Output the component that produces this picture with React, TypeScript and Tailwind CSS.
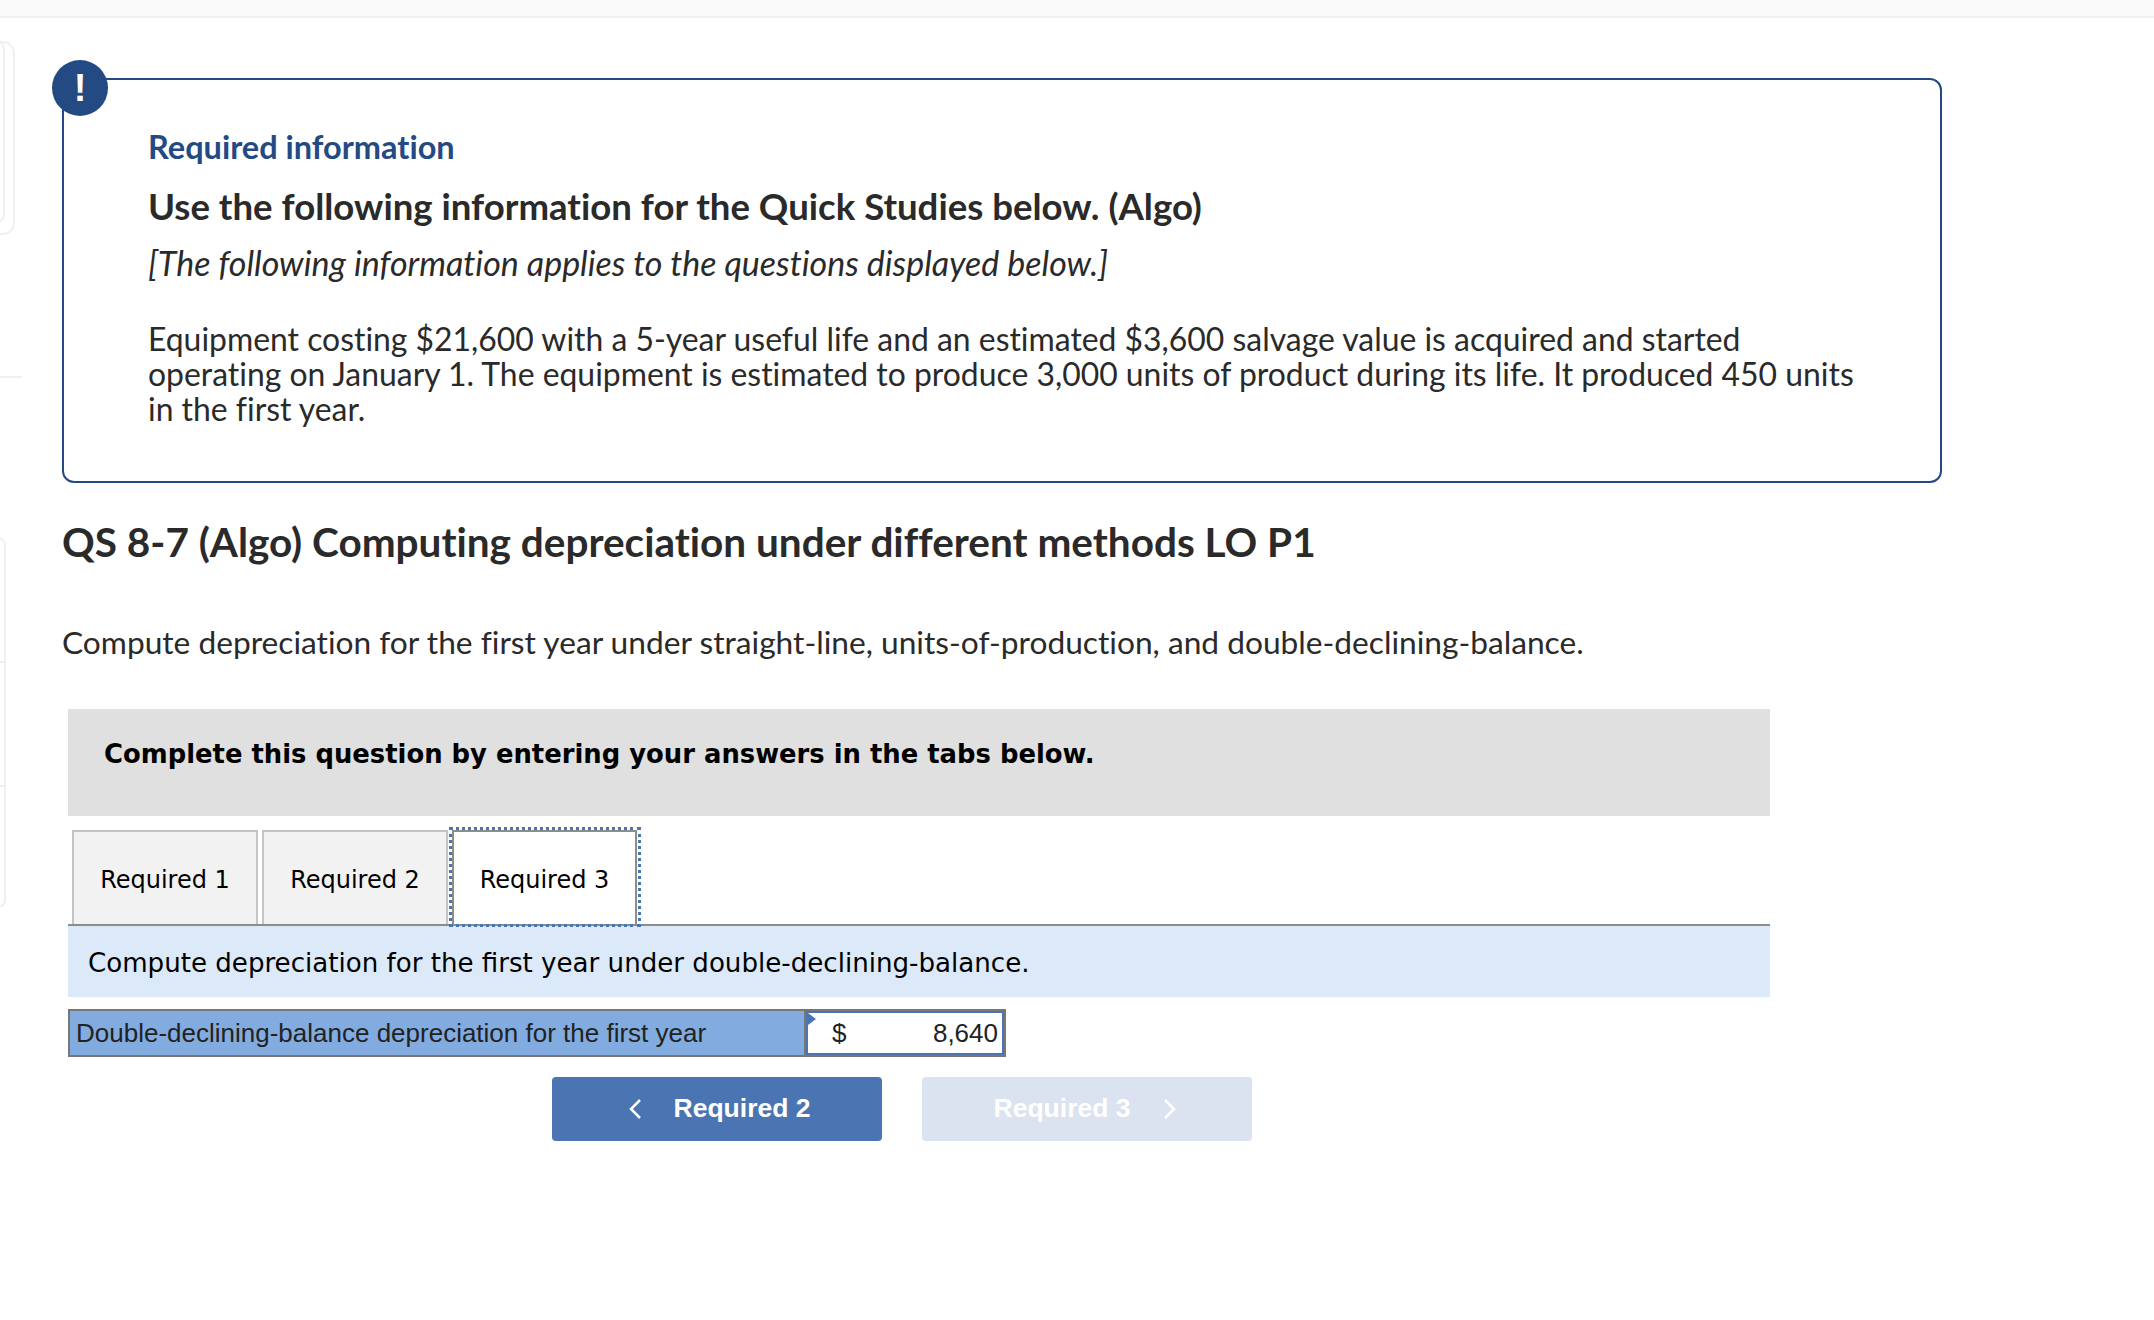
import React from 'react';

const proxima = "font-['Lato','Noto_Sans',sans-serif] [font-variant-ligatures:none]";

const App = () => {
  return (
    <div className="min-h-[1320px] bg-white relative overflow-hidden">
      {/* top strip */}
      <div className="h-[18px] bg-[#fafafa] border-b-2 border-[#f0f0f0]" />

      {/* left rail leftovers */}
      <div className="absolute left-[-20px] top-[41px] w-[35px] h-[194px] border-2 border-[#f0f0f0] rounded-xl" />
      <div className="absolute left-[-20px] top-[41px] w-[25px] h-[182px] border-2 border-[#f0f0f0] rounded-lg" />
      <div className="absolute left-0 top-[376px] w-[22px] h-[2px] bg-[#f0f0f0]" />
      <div className="absolute left-[-20px] top-[537px] w-[26px] h-[371px] border-2 border-[#f0f0f0] rounded-lg" />
      <div className="absolute left-0 top-[661px] w-[5px] h-[2px] bg-[#f0f0f0]" />
      <div className="absolute left-0 top-[785px] w-[5px] h-[2px] bg-[#f0f0f0]" />

      <div className="w-[1942px] pl-[62px] pt-[60px]">
        {/* Required information box */}
        <section className="relative h-[405px] border-2 border-[#234a83] rounded-xl pl-[84px] pr-[72px] pt-[49px] text-[#2a2a2a]">
          <div className="absolute left-[-12px] top-[-20px] w-14 h-14 rounded-full bg-[#234a83] flex items-center justify-center text-white text-[38px] font-bold font-['Liberation_Sans',sans-serif]">
            !
          </div>
          <h2 className={`${proxima} text-[32.5px] leading-[36px] font-bold text-[#234a83]`}>Required information</h2>
          <h3 className={`${proxima} text-[36.6px] leading-[42px] font-bold mt-[20px]`}>
            Use the following information for the Quick Studies below. (Algo)
          </h3>
          <p className={`${proxima} text-[34px] leading-[36px] italic mt-[18px]`}>
            [The following information applies to the questions displayed below.]
          </p>
          <p className={`${proxima} text-[31.9px] leading-[35px] mt-[41px]`}>
            Equipment costing $21,600 with a 5-year useful life and an estimated $3,600 salvage value is acquired and started operating on January 1. The equipment is estimated to produce 3,000 units of product during its life. It produced 450 units in the first year.
          </p>
        </section>

        <h1 className={`${proxima} text-[40.5px] leading-[48px] font-bold text-[#2a2a2a] mt-[35px]`}>
          QS 8-7 (Algo) Computing depreciation under different methods LO P1
        </h1>
        <p className={`${proxima} text-[31.7px] leading-[40px] text-[#2a2a2a] mt-[56px]`}>
          Compute depreciation for the first year under straight-line, units-of-production, and double-declining-balance.
        </p>

        {/* Question worksheet */}
        <div className="w-[1702px] ml-[6px] mt-[47px]">
          <div className="h-[107px] bg-[#e0e0e0] pl-9 pt-[28px] font-['DejaVu_Sans',sans-serif] font-bold text-[25.85px] leading-[34px] text-black">
            Complete this question by entering your answers in the tabs below.
          </div>

          <div className="flex items-end pl-[4px] mt-[14px] h-[94px] font-['DejaVu_Sans',sans-serif] text-[24px] text-black">
            <div className="w-[186px] h-[94px] pt-1 bg-[#f2f2f2] border-2 border-b-0 border-[#c4c4c4] flex items-center justify-center">Required 1</div>
            <div className="w-[186px] h-[94px] pt-1 ml-[4px] bg-[#f2f2f2] border-2 border-b-0 border-[#c4c4c4] flex items-center justify-center">Required 2</div>
            <div className="relative w-[185px] h-[94px] pt-1 ml-[4px] bg-white border-2 border-b-0 border-[#8c8c8c] flex items-center justify-center z-10">
              Required 3
              <div className="absolute left-[-5px] right-[-6px] top-[-5px] bottom-[-3px] border-[3px] border-dotted border-[#4a75b2]" />
            </div>
          </div>

          <div className="h-[73px] pt-1 bg-[#dce9f8] border-t-2 border-[#8c8c8c] pl-5 flex items-center font-['DejaVu_Sans',sans-serif] text-[26.1px] text-black">
            Compute depreciation for the first year under double-declining-balance.
          </div>

          <div className="mt-[12px] flex w-[938px] h-[48px] border-2 border-[#777777] font-['Liberation_Sans',sans-serif] text-[26px] text-[#222222]">
            <div className="w-[736px] bg-[#82abdf] border-r-2 border-[#777777] pl-[6px] flex items-center">
              Double-declining-balance depreciation for the first year
            </div>
            <div className="relative flex-1 bg-white border-2 border-[#4a75b2] flex items-center justify-between pl-[24px] pr-[4px]">
              <div className="absolute left-0 top-0 w-0 h-0 border-y-[6px] border-y-transparent border-l-[8px] border-l-[#4a75b2]" />
              <span>$</span>
              <span>8,640</span>
            </div>
          </div>

          <div className="flex gap-10 ml-[484px] mt-[20px] font-['Liberation_Sans',sans-serif] font-bold text-[26.5px] text-white">
            <button className="w-[330px] h-[64px] pl-[5px] rounded bg-[#4a75b2] flex items-center justify-center gap-[32px]">
              <svg width="13" height="20" viewBox="0 0 13 20" fill="none" stroke="currentColor" strokeWidth="2.5">
                <polyline points="11,1 2,10 11,19" />
              </svg>
              Required 2
            </button>
            <button className="w-[330px] h-[64px] pr-[4px] rounded bg-[#dae3ef] flex items-center justify-center gap-[33px]">
              Required 3
              <svg width="13" height="20" viewBox="0 0 13 20" fill="none" stroke="currentColor" strokeWidth="2.5">
                <polyline points="2,1 11,10 2,19" />
              </svg>
            </button>
          </div>
        </div>
      </div>
    </div>
  );
};

export default App;
